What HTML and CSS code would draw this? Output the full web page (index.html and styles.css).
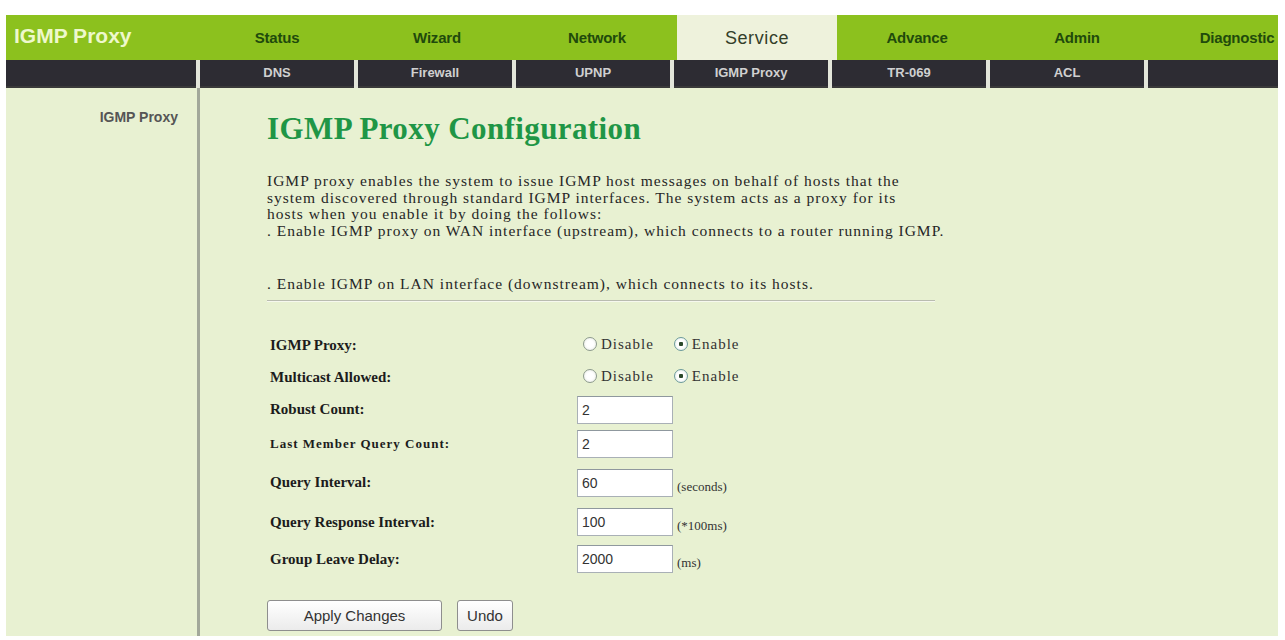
FILE: index.html
```html
<!DOCTYPE html>
<html lang="en">
<head>
    <meta charset="UTF-8">
    <title>IGMP Proxy</title>
    <link rel="stylesheet" href="styles.css">
</head>
<body>
    <div class="page">
        <div class="topnav">
            <div class="logo">IGMP Proxy</div>
            <a href="#" class="tab">Status</a>
            <a href="#" class="tab">Wizard</a>
            <a href="#" class="tab">Network</a>
            <a href="#" class="tab active">Service</a>
            <a href="#" class="tab">Advance</a>
            <a href="#" class="tab">Admin</a>
            <a href="#" class="tab">Diagnostic</a>
        </div>
        <div class="subnav">
            <div class="sub first"></div>
            <a href="#" class="sub">DNS</a>
            <a href="#" class="sub">Firewall</a>
            <a href="#" class="sub">UPNP</a>
            <a href="#" class="sub">IGMP Proxy</a>
            <a href="#" class="sub">TR-069</a>
            <a href="#" class="sub">ACL</a>
            <div class="sub"></div>
        </div>
        <div class="main">
            <div class="sidebar">
                <a href="#">IGMP Proxy</a>
            </div>
            <div class="content">
                <h2>IGMP Proxy Configuration</h2>
                <p class="intro">
                    IGMP proxy enables the system to issue IGMP host messages on behalf of hosts that the<br>
                    system discovered through standard IGMP interfaces. The system acts as a proxy for its<br>
                    hosts when you enable it by doing the follows:<br>
                    . Enable IGMP proxy on WAN interface (upstream), which connects to a router running IGMP.
                </p>
                <p class="intro last">. Enable IGMP on LAN interface (downstream), which connects to its hosts.</p>
                <hr>
                <form action="#" method="post">
                    <table class="cfg">
                        <tr>
                            <td class="lbl">IGMP Proxy:</td>
                            <td>
                                <label class="radio"><input type="radio" name="proxy" value="0"> Disable</label>
                                <label class="radio"><input type="radio" name="proxy" value="1" checked> Enable</label>
                            </td>
                        </tr>
                        <tr>
                            <td class="lbl">Multicast Allowed:</td>
                            <td>
                                <label class="radio"><input type="radio" name="mcast" value="0"> Disable</label>
                                <label class="radio"><input type="radio" name="mcast" value="1" checked> Enable</label>
                            </td>
                        </tr>
                        <tr>
                            <td class="lbl">Robust Count:</td>
                            <td><input type="text" class="num" value="2"></td>
                        </tr>
                        <tr class="r4">
                            <td class="lbl small">Last Member Query Count:</td>
                            <td><input type="text" class="num" value="2"></td>
                        </tr>
                        <tr class="r5">
                            <td class="lbl">Query Interval:</td>
                            <td><input type="text" class="num" value="60"> <span class="unit">(seconds)</span></td>
                        </tr>
                        <tr class="r6">
                            <td class="lbl">Query Response Interval:</td>
                            <td><input type="text" class="num" value="100"> <span class="unit">(*100ms)</span></td>
                        </tr>
                        <tr class="r6">
                            <td class="lbl">Group Leave Delay:</td>
                            <td><input type="text" class="num" value="2000"> <span class="unit">(ms)</span></td>
                        </tr>
                    </table>
                    <div class="buttons">
                        <button type="submit" class="btn apply">Apply Changes</button>
                        <button type="reset" class="btn undo">Undo</button>
                    </div>
                </form>
            </div>
        </div>
    </div>
</body>
</html>
```

FILE: styles.css
```css
body {
    margin: 0;
    background-color: #ffffff;
    font-family: "Liberation Serif", "Times New Roman", serif;
}

.page {
    margin: 15px 7px 0 6px;
    overflow: hidden;
}

/* top menu */
.topnav {
    display: flex;
    height: 45px;
    background-color: #8cc11e;
}

.logo {
    flex: 0 0 183px;
    padding-left: 8px;
    line-height: 41px;
    font-family: "Liberation Sans", Arial, sans-serif;
    font-weight: bold;
    font-size: 21px;
    color: #eef8cc;
}

.tab {
    flex: 0 0 160px;
    text-align: center;
    line-height: 46px;
    font-family: "Liberation Sans", Arial, sans-serif;
    font-weight: bold;
    font-size: 15px;
    color: #1f4a0c;
    text-decoration: none;
    letter-spacing: -0.2px;
}

.tab.active {
    background-color: #eef2dc;
    color: #33402a;
    font-weight: normal;
    font-size: 18px;
    letter-spacing: 0.6px;
}

/* second level menu */
.subnav {
    display: flex;
    gap: 4px;
    height: 28px;
    background-color: #e3e6da;
}

.sub {
    flex: 0 0 154px;
    background-color: #2d2c33;
    text-align: center;
    line-height: 26px;
    font-family: "Liberation Sans", Arial, sans-serif;
    font-weight: bold;
    font-size: 13px;
    color: #d0d0d0;
    text-decoration: none;
    border-bottom: 2px solid #3a3a3a;
}

.sub.first {
    flex-basis: 190px;
}

/* page body */
.main {
    display: flex;
    height: 548px;
    background-color: #e8f1d2;
}

.sidebar {
    flex: 0 0 172px;
    padding: 20px 19px 0 0;
    border-right: 3px solid #a2a89a;
    text-align: right;
}

.sidebar a {
    font-family: "Liberation Sans", Arial, sans-serif;
    font-weight: bold;
    font-size: 14px;
    color: #555555;
    text-decoration: none;
}

.content {
    padding: 23px 0 0 67px;
    width: 680px;
}

.content h2 {
    margin: 0 0 26px 0;
    font-size: 31px;
    color: #1f9646;
    letter-spacing: 0.4px;
}

.intro {
    margin: 0 0 36px 0;
    font-size: 15.5px;
    line-height: 16.7px;
    letter-spacing: 1px;
    color: #262626;
    white-space: nowrap;
}

.intro.last {
    margin-bottom: 0;
}

.content hr {
    margin: 7px 0 28px 0;
    border: none;
    border-top: 1px solid #b9bcb0;
    border-bottom: 1px solid #f6f8ee;
    width: 668px;
}

.cfg {
    border-collapse: collapse;
}

.cfg td {
    padding: 0;
    height: 32px;
    vertical-align: middle;
}

.cfg tr.r4 td {
    height: 36px;
}

.cfg tr.r5 td {
    height: 42px;
}

.cfg tr.r6 td {
    height: 37px;
}

.cfg .lbl {
    width: 307px;
    padding-left: 3px;
    font-weight: bold;
    font-size: 15px;
    color: #1c1c1c;
}

.cfg .lbl.small {
    font-size: 13px;
    letter-spacing: 1px;
}

.radio {
    display: inline-flex;
    align-items: center;
    margin: 0 10px 0 6px;
    font-size: 15px;
    letter-spacing: 1px;
    color: #333;
}

.radio input {
    appearance: none;
    width: 14px;
    height: 14px;
    margin: 0 4px 0 0;
    border: 1px solid #8c9a8c;
    border-radius: 50%;
    background: radial-gradient(circle, #ffffff 40%, #e4e8e0 100%);
}

.radio input:checked {
    background: radial-gradient(circle, #2c4a2c 0 2px, #ffffff 2.5px 45%, #d8e6e0 100%);
    border-color: #6c9a9a;
}

.num {
    box-sizing: border-box;
    width: 96px;
    height: 28px;
    padding: 2px 4px;
    border: 1px solid #a9b0b6;
    border-top-color: #8f989e;
    background-color: #ffffff;
    font-family: "Liberation Sans", Arial, sans-serif;
    font-size: 14px;
    color: #333;
    vertical-align: middle;
}

.unit {
    font-size: 13px;
    color: #333;
    vertical-align: -4px;
}

.buttons {
    margin-top: 22px;
}

.btn {
    height: 31px;
    padding: 0;
    border: 1px solid #8e8e8e;
    border-radius: 3px;
    background: linear-gradient(#ffffff, #ebebeb);
    font-family: "Liberation Sans", Arial, sans-serif;
    font-size: 15px;
    color: #333;
    cursor: pointer;
}

.btn.apply {
    width: 175px;
    margin-right: 11px;
}

.btn.undo {
    width: 56px;
}
```
